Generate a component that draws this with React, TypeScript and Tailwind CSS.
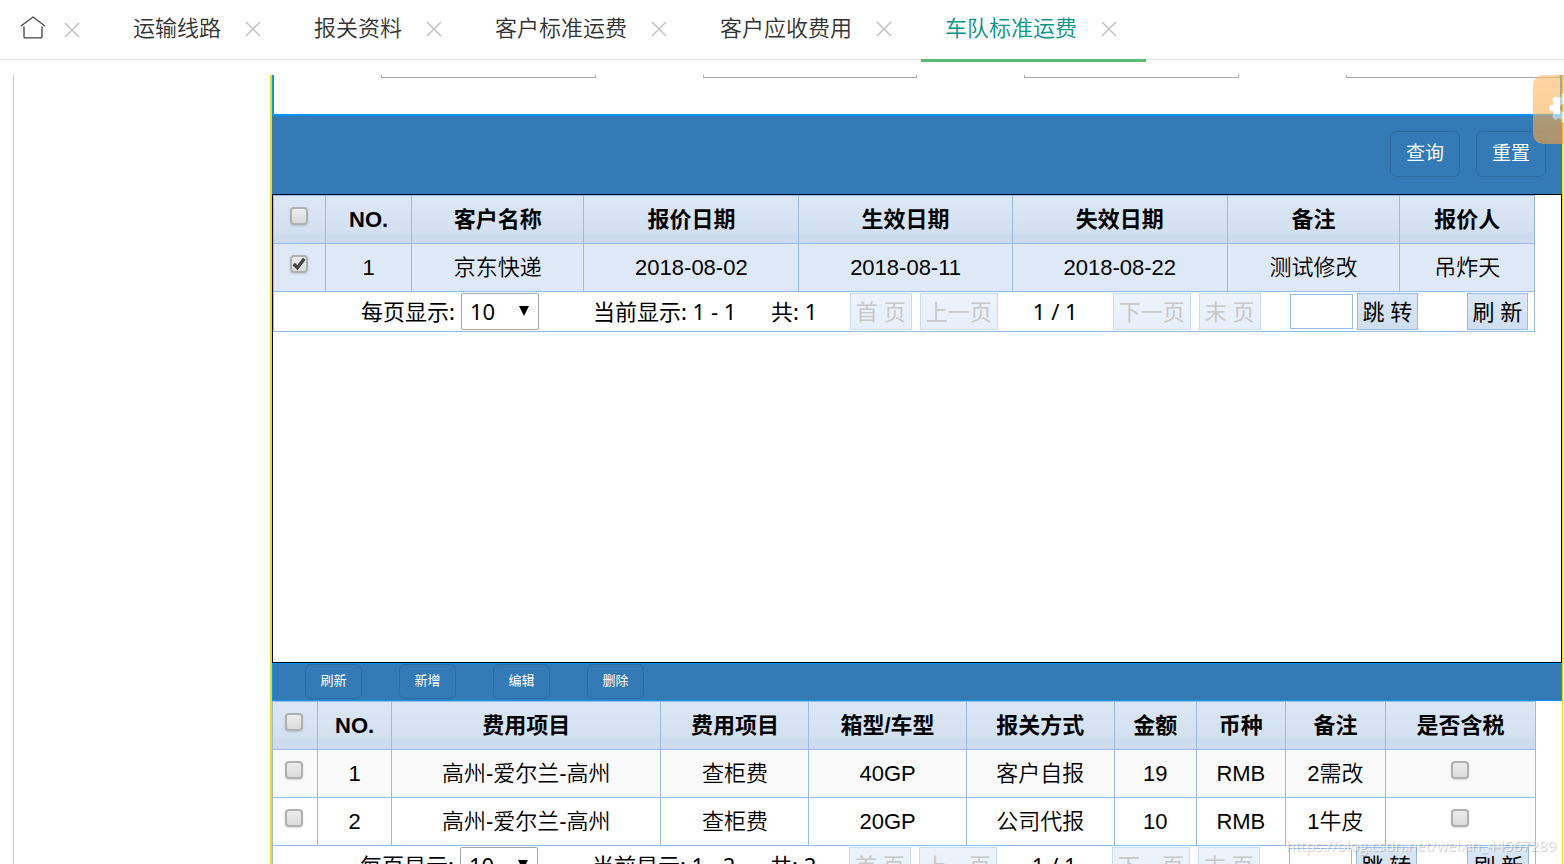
import { useState } from 'react';
import { clsx } from 'clsx';

interface Tab {
  key: string;
  title: string;
}

interface Quote {
  id: number;
  customer: string;
  quoteDate: string;
  startDate: string;
  endDate: string;
  remark: string;
  quoter: string;
}

interface Fee {
  id: number;
  route: string;
  item: string;
  boxType: string;
  declareType: string;
  amount: number;
  currency: string;
  remark: string;
  taxed: boolean;
}

const TABS: Tab[] = [
  { key: 'line', title: '运输线路' },
  { key: 'declare', title: '报关资料' },
  { key: 'customer-standard', title: '客户标准运费' },
  { key: 'customer-receivable', title: '客户应收费用' },
  { key: 'fleet-standard', title: '车队标准运费' },
];

const QUOTES: Quote[] = [
  {
    id: 1,
    customer: '京东快递',
    quoteDate: '2018-08-02',
    startDate: '2018-08-11',
    endDate: '2018-08-22',
    remark: '测试修改',
    quoter: '吊炸天',
  },
];

const FEES: Fee[] = [
  { id: 1, route: '高州-爱尔兰-高州', item: '查柜费', boxType: '40GP', declareType: '客户自报', amount: 19, currency: 'RMB', remark: '2需改', taxed: false },
  { id: 2, route: '高州-爱尔兰-高州', item: '查柜费', boxType: '20GP', declareType: '公司代报', amount: 10, currency: 'RMB', remark: '1牛皮', taxed: false },
];

const QUOTE_HEADS = ['客户名称', '报价日期', '生效日期', '失效日期', '备注', '报价人'];
const QUOTE_COLS = ['w-[52px]', 'w-[86px]', 'w-[172px]', 'w-[215px]', 'w-[213px]', 'w-[215px]', 'w-[172px]', 'w-[135px]'];

const FEE_HEADS = ['费用项目', '费用项目', '箱型/车型', '报关方式', '金额', '币种', '备注', '是否含税'];
const FEE_COLS = ['w-[45px]', 'w-[74px]', 'w-[269px]', 'w-[148px]', 'w-[157px]', 'w-[148px]', 'w-[82px]', 'w-[89px]', 'w-[100px]', 'w-[150px]'];

const CELL = 'h-12 border border-[#99bbe8] p-0 text-center';

function CloseIcon() {
  return (
    <svg className="h-4 w-4" viewBox="0 0 16 16" fill="none" stroke="#c2c2c2" strokeWidth="1.5">
      <path d="M1 1 15 15M15 1 1 15" />
    </svg>
  );
}

function HomeIcon() {
  return (
    <svg className="h-6 w-[26px]" viewBox="0 0 26 24" fill="none" stroke="#444" strokeWidth="1.3">
      <path d="M1 10 13 1 25 10" />
      <path d="M4 10.5V20.7Q4 21.9 5.2 21.9H20.8Q22 21.9 22 20.7V10.5" />
    </svg>
  );
}

function GearIcon() {
  const teeth = [0, 45, 90, 135, 180, 225, 270, 315];
  return (
    <svg className="h-[30px] w-[30px] shrink-0" viewBox="-15 -15 30 30">
      {teeth.map((angle) => (
        <rect key={angle} x="-3" y="-14.5" width="6" height="8" rx="1.5" fill="#fff" transform={`rotate(${angle})`} />
      ))}
      <circle r="7.8" fill="none" stroke="#fff" strokeWidth="7.6" />
    </svg>
  );
}

function Checkbox({ label, defaultChecked }: { label: string; defaultChecked?: boolean }) {
  return (
    <span className="relative mr-0.5 mb-2.5 inline-block h-[18px] w-[18px] align-middle">
      <input
        type="checkbox"
        aria-label={label}
        defaultChecked={defaultChecked}
        className="peer block h-full w-full appearance-none rounded-[4px] border-2 border-[#b0b0b0] bg-linear-to-b from-[#ededed] to-[#dadada] shadow-[0_1px_2px_rgba(0,0,0,0.15)]"
      />
      <svg
        className="pointer-events-none absolute inset-0 hidden h-full w-full peer-checked:block"
        viewBox="0 0 17 17"
        fill="none"
        stroke="#444"
        strokeWidth="3.2"
      >
        <path d="M3.5 8.5 7 12 13.5 3.5" />
      </svg>
    </span>
  );
}

function PageButton({ children, disabled }: { children: string; disabled?: boolean }) {
  return (
    <button
      disabled={disabled}
      className="h-[37px] shrink-0 border border-[#99bbe8] bg-linear-to-b from-[#dbe7f5] to-[#cfdef0] px-[5px] pb-0.5 leading-none whitespace-nowrap disabled:border-[#ccddf3] disabled:from-[#edf3fa] disabled:to-[#e7effa] disabled:text-[#c8c8c8]"
    >
      {children}
    </button>
  );
}

function Pager({ id, total }: { id: string; total: number }) {
  return (
    <div className="flex h-10 w-[98%] items-center border-r border-b border-l border-[#99bbe8] pl-[87px] font-['Noto_Sans','Noto_Sans_CJK_SC',sans-serif] font-[390] whitespace-nowrap">
      <label htmlFor={`${id}-size`} className="w-[100px] shrink-0 pb-0.5">每页显示:</label>
      <div className="relative w-[78px] shrink-0">
        <select id={`${id}-size`} className="block h-[37px] w-full appearance-none rounded-xs border border-[#a9a9a9] bg-white pb-0.5 pl-2 leading-none">
          <option>10</option>
          <option>20</option>
          <option>50</option>
        </select>
        <svg className="pointer-events-none absolute top-[13px] right-[10px] h-[10px] w-[10px]" viewBox="0 0 10 10">
          <path d="M0 0H10L5 10Z" fill="#000" />
        </svg>
      </div>
      <span className="ml-[54px] w-[178px] shrink-0 pb-0.5">当前显示: 1 - {total}</span>
      <span className="w-[79px] shrink-0 pb-0.5">共: {total}</span>
      <div className="flex gap-2">
        <PageButton disabled>首 页</PageButton>
        <PageButton disabled>上一页</PageButton>
      </div>
      <span className="w-[115px] shrink-0 pb-0.5 text-center">1 / 1</span>
      <div className="flex gap-2">
        <PageButton disabled>下一页</PageButton>
        <PageButton disabled>末 页</PageButton>
      </div>
      <input aria-label="页码" className="mr-1 ml-[29px] h-[35px] w-[63px] border border-[#99bbe8] bg-white px-1" />
      <PageButton>跳 转</PageButton>
      <div className="mr-[6px] ml-auto">
        <PageButton>刷 新</PageButton>
      </div>
    </div>
  );
}

function TableHead({ heads }: { heads: string[] }) {
  return (
    <thead>
      <tr className="bg-linear-to-b from-[#dae6f4] from-10% via-[#d4e1f1] via-70% to-[#ccdbee] to-80%">
        <th className={CELL}>
          <Checkbox label="全选" />
        </th>
        <th className={CELL}>NO.</th>
        {heads.map((head, i) => (
          <th key={i} className={CELL}>{head}</th>
        ))}
      </tr>
    </thead>
  );
}

function QuoteTable() {
  return (
    <table className="w-[98%] table-fixed border-collapse">
      <colgroup>
        {QUOTE_COLS.map((col, i) => <col key={i} className={col} />)}
      </colgroup>
      <TableHead heads={QUOTE_HEADS} />
      <tbody>
        {QUOTES.map((row) => (
          <tr key={row.id} className="bg-[#dfe8f6]">
            <td className={CELL}>
              <Checkbox label={row.customer} defaultChecked />
            </td>
            <td className={CELL}>{row.id}</td>
            <td className={CELL}>{row.customer}</td>
            <td className={CELL}>{row.quoteDate}</td>
            <td className={CELL}>{row.startDate}</td>
            <td className={CELL}>{row.endDate}</td>
            <td className={CELL}>{row.remark}</td>
            <td className={CELL}>{row.quoter}</td>
          </tr>
        ))}
      </tbody>
    </table>
  );
}

function FeeTable() {
  return (
    <table className="w-[98%] table-fixed border-collapse">
      <colgroup>
        {FEE_COLS.map((col, i) => <col key={i} className={col} />)}
      </colgroup>
      <TableHead heads={FEE_HEADS} />
      <tbody>
        {FEES.map((row) => (
          <tr key={row.id} className="odd:bg-[#fafafa]">
            <td className={CELL}>
              <Checkbox label={row.route} />
            </td>
            <td className={CELL}>{row.id}</td>
            <td className={CELL}>{row.route}</td>
            <td className={CELL}>{row.item}</td>
            <td className={CELL}>{row.boxType}</td>
            <td className={CELL}>{row.declareType}</td>
            <td className={CELL}>{row.amount}</td>
            <td className={CELL}>{row.currency}</td>
            <td className={CELL}>{row.remark}</td>
            <td className={CELL}>
              <Checkbox label="是否含税" defaultChecked={row.taxed} />
            </td>
          </tr>
        ))}
      </tbody>
    </table>
  );
}

export default function App() {
  const [active, setActive] = useState('fleet-standard');

  return (
    <div className="relative flex h-screen flex-col overflow-hidden bg-white font-['Liberation_Sans','Noto_Sans_CJK_SC',sans-serif] text-[22px] leading-[30px] font-[350] text-black">
      {/* 标签页 */}
      <nav className="flex h-[60px] shrink-0 border-b border-[#e6e6e6] text-[#333]">
        <div className="flex w-[109px] shrink-0 items-center pb-1 pl-5">
          <button aria-label="首页"><HomeIcon /></button>
          <button aria-label="关闭" className="mt-1 ml-[18px]"><CloseIcon /></button>
        </div>
        {TABS.map((tab) => (
          <div
            key={tab.key}
            className={clsx(
              'relative flex h-[59px] shrink-0 items-center pr-[29px] pb-0.5 pl-6',
              active === tab.key && 'text-[#009688]'
            )}
          >
            <button onClick={() => setActive(tab.key)} className="whitespace-nowrap">{tab.title}</button>
            <button aria-label={`关闭${tab.title}`} className="ml-6 pt-px"><CloseIcon /></button>
            {active === tab.key && <span className="absolute top-[59px] left-0 h-[3px] w-full bg-[#5fb878]" />}
          </div>
        ))}
      </nav>

      <div className="mt-[15px] ml-[13px] flex min-h-0 flex-1 overflow-hidden border-l border-[#f5d327]">
        <aside className="w-64 shrink-0" />
        <main className="mr-px min-w-0 flex-1 border-r border-l-2 border-[#ffd800]">
          {/* 查询条件 */}
          <form className="h-[39px] border-x-2 border-[#0096ff]">
            <div className="grid h-[3px] grid-cols-4 overflow-hidden">
              {['客户名称', '报价日期', '生效日期', '失效日期'].map((name) => (
                <div key={name} className="flex items-end pl-[33.33%]">
                  <input aria-label={name} className="h-[3px] w-full border border-t-0 border-[#a9a9a9]" />
                </div>
              ))}
            </div>
          </form>
          <div className="flex h-20 justify-end gap-4 border-t-2 border-[#0096ff] bg-[#337ab7] px-4 pt-[15px] text-[19px] font-normal text-white">
            <button className="h-[46px] w-[70px] rounded-md border border-[#2e6da4]">查询</button>
            <button className="h-[46px] w-[70px] rounded-md border border-[#2e6da4]">重置</button>
          </div>

          {/* 报价列表 */}
          <section className="min-h-[469px] border border-black">
            <QuoteTable />
            <Pager id="quote" total={1} />
          </section>

          {/* 费用明细 */}
          <section>
            <div className="flex h-[38px] gap-[37px] border border-[#0096ff] bg-[#337ab7] px-8 text-[13px] font-normal text-white">
              {['刷新', '新增', '编辑', '删除'].map((name) => (
                <button key={name} className="h-[35px] w-[57px] rounded-md border border-[#2e6da4] pb-0.5">{name}</button>
              ))}
            </div>
            <FeeTable />
            <Pager id="fee" total={2} />
          </section>
        </main>
      </div>

      {/* 设置入口 */}
      <button
        aria-label="设置"
        className="absolute top-[75px] right-0 flex h-[69px] w-[31px] items-center overflow-hidden rounded-l-[10px] bg-linear-to-b from-[#ffbc69] to-[#ffa53c] pb-1 pl-4 opacity-60"
      >
        <GearIcon />
      </button>

      <span className="pointer-events-none absolute right-2 bottom-1 font-['Open_Sans',sans-serif] text-[15px] font-normal text-white/70 [text-shadow:1px_1px_1px_rgba(0,0,0,0.2)]">
        https://blog.csdn.net/weixin_44567289
      </span>
    </div>
  );
}
